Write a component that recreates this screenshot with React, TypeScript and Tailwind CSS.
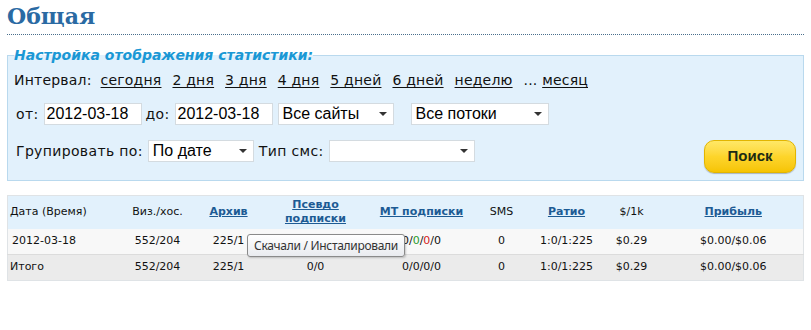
import React from "react";

const intervals = ["сегодня", "2 дня", "3 дня", "4 дня", "5 дней", "6 дней", "неделю"];

function FakeSelect({ label, width }: { label: string; width: string }) {
  return (
    <div
      className={`flex h-[22px] items-center justify-between border border-[#d4dbe0] bg-white pl-[4px] pr-[6px] font-['Liberation_Sans',sans-serif] text-[16px] tracking-normal text-black ${width}`}
    >
      <span>{label}</span>
      <span className="h-0 w-0 border-x-[4px] border-t-[4px] border-x-transparent border-t-[#333]"></span>
    </div>
  );
}

function DateInput({ value }: { value: string }) {
  return (
    <div className="flex h-[22px] w-[98px] items-center border border-[#d4dbe0] bg-white pl-[2px] font-['Liberation_Sans',sans-serif] text-[16px] tracking-normal text-black">
      {value}
    </div>
  );
}

export default function App() {
  return (
    <div className="relative h-[330px] w-[811px] bg-white px-[7px] font-['DejaVu_Sans',sans-serif] text-[#111]">
      {/* заголовок */}
      <h1 className="border-b border-dotted border-[#4a6f8c] pt-[2px] pb-[4px] font-['DejaVu_Serif',serif] text-[22px] leading-[28px] font-bold text-[#2a6aa3]">
        Общая
      </h1>

      {/* настройки */}
      <fieldset className="mt-[12px] h-[134px] border border-[#b9d9ee] bg-[#e2f1fc] pr-[7px] pl-[6px] tracking-[0.35px]">
        <legend className="text-[14px] leading-[16px] font-bold tracking-normal text-[#1b98d5] italic">
          Настройка отображения статистики:
        </legend>

        <div className="mt-[6px] flex h-[22px] items-center text-[14px] tracking-[0.2px]">
          <span className="mr-[9px]">Интервал:</span>
          <div className="flex items-center gap-[11px]">
            {intervals.map((i) => (
              <a key={i} className="underline underline-offset-2">
                {i}
              </a>
            ))}
            <span>
              ... <a className="underline underline-offset-2">месяц</a>
            </span>
          </div>
        </div>

        <div className="mt-[12px] flex h-[22px] items-center text-[14px]">
          <span className="ml-[2px] mr-[5px]">от:</span>
          <DateInput value="2012-03-18" />
          <span className="ml-[4px] mr-[5px]">до:</span>
          <DateInput value="2012-03-18" />
          <div className="ml-[5px]">
            <FakeSelect label="Все сайты" width="w-[116px]" />
          </div>
          <div className="ml-[17px]">
            <FakeSelect label="Все потоки" width="w-[138px]" />
          </div>
        </div>

        <div className="mt-[15px] flex items-start justify-between">
          <div className="flex h-[22px] items-center text-[14px]">
            <span className="ml-[2px] mr-[5px]">Групировать по:</span>
            <FakeSelect label="По дате" width="w-[106px]" />
            <span className="ml-[5px] mr-[5px]">Тип смс:</span>
            <FakeSelect label="" width="w-[146px]" />
          </div>
          <button className="h-[33px] w-[92px] rounded-[10px] border border-[#e2b500] bg-gradient-to-b from-[#ffe866] via-[#fdd52a] to-[#f6c400] font-['Liberation_Sans',sans-serif] text-[15px] font-bold tracking-normal text-[#1d2b14] shadow-[0_1px_1px_rgba(0,0,0,0.25)]">
            Поиск
          </button>
        </div>
      </fieldset>

      {/* таблица статистики */}
      <table className="mt-[14px] w-full table-fixed border-collapse border border-[#dfe3e6] text-[11px]">
        <colgroup>
          <col className="w-[108px]" />
          <col className="w-[84px]" />
          <col className="w-[58px]" />
          <col className="w-[116px]" />
          <col className="w-[96px]" />
          <col className="w-[64px]" />
          <col className="w-[66px]" />
          <col className="w-[64px]" />
          <col />
        </colgroup>
        <thead>
          <tr className="h-[33px] bg-[#e2f1fc] text-center">
            <th className="pl-[2px] text-left font-normal">Дата (Время)</th>
            <th className="font-normal">Виз./хос.</th>
            <th className="font-bold text-[#1d5b94] underline">Архив</th>
            <th className="leading-[14px] font-bold text-[#1d5b94] underline">
              Псевдо
              <br />
              подписки
            </th>
            <th className="font-bold text-[#1d5b94] underline">МТ подписки</th>
            <th className="font-normal">SMS</th>
            <th className="font-bold text-[#1d5b94] underline">Ратио</th>
            <th className="font-normal">$/1k</th>
            <th className="font-bold text-[#1d5b94] underline">Прибыль</th>
          </tr>
        </thead>
        <tbody className="text-center">
          <tr className="h-[26px] border-b border-[#dcdcdc] bg-[#f8f8f8]">
            <td className="pl-[4px] text-left">2012-03-18</td>
            <td>552/204</td>
            <td>225/1</td>
            <td>0/0</td>
            <td>
              0/<span className="text-[#2a9a2a]">0</span>/<span className="text-[#d42020]">0</span>/0
            </td>
            <td>0</td>
            <td>1:0/1:225</td>
            <td>$0.29</td>
            <td>$0.00/$0.06</td>
          </tr>
          <tr className="h-[26px] bg-[#ebebeb]">
            <td className="pl-[2px] text-left">Итого</td>
            <td>552/204</td>
            <td>225/1</td>
            <td>0/0</td>
            <td>0/0/0/0</td>
            <td>0</td>
            <td>1:0/1:225</td>
            <td>$0.29</td>
            <td>$0.00/$0.06</td>
          </tr>
        </tbody>
      </table>

      {/* всплывающая подсказка */}
      <div className="absolute top-[234px] left-[247px] flex h-[23px] w-[158px] items-center justify-center rounded-[3px] border border-[#8a8a8a] bg-gradient-to-b from-white to-[#e9ebef] font-['Noto_Sans',sans-serif] text-[12px] tracking-[-0.3px] text-[#333] shadow-[1px_1px_2px_rgba(0,0,0,0.2)]">
        Скачали / Инсталировали
      </div>
    </div>
  );
}
